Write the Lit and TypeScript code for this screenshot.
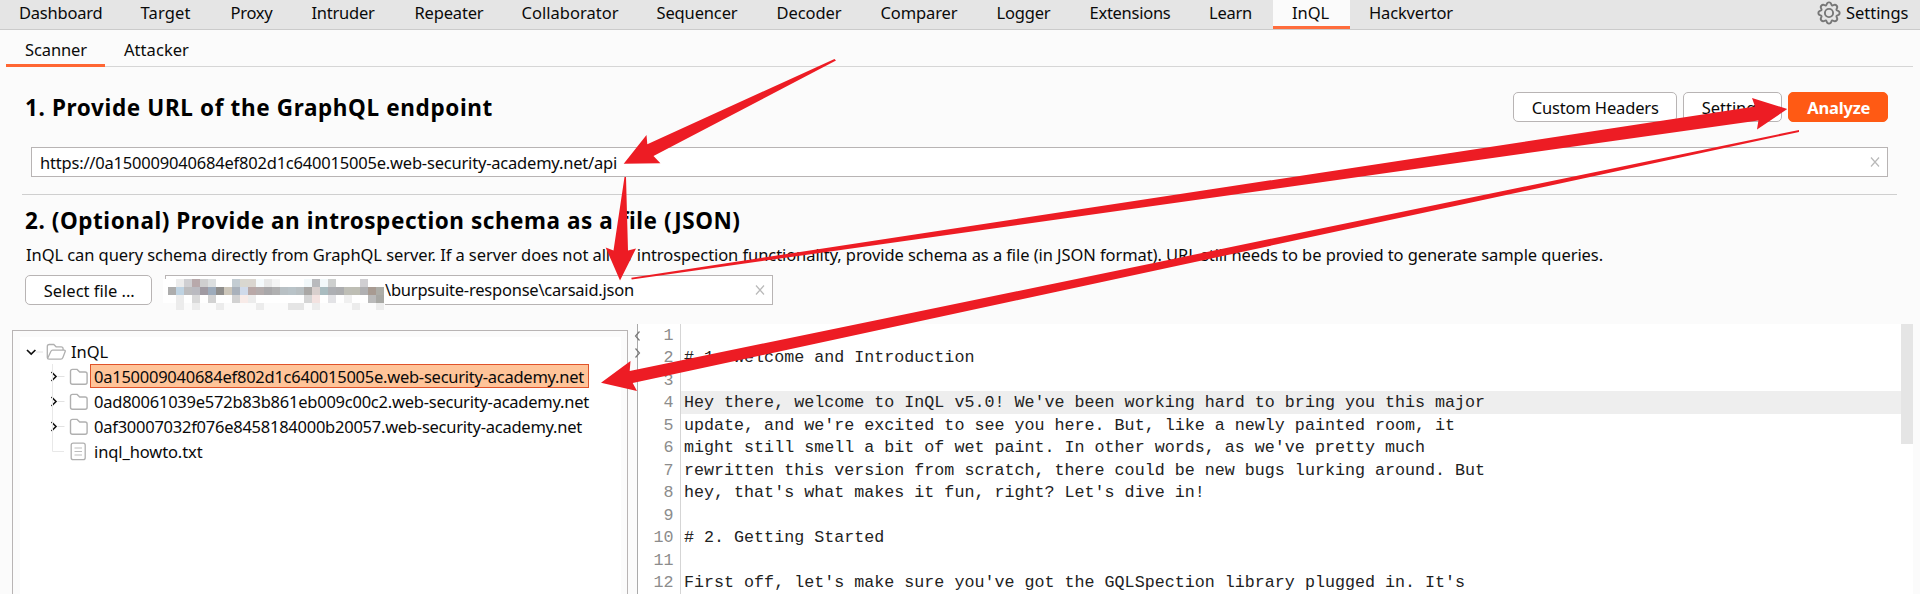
import { LitElement, html, css, svg } from "lit";
import { customElement, property, query } from "lit/decorators.js";
import { classMap } from "lit/directives/class-map.js";
import { styleMap } from "lit/directives/style-map.js";

/** A single line of text whose tracking is adjusted so it spans a given width. */
@customElement("fit-text")
class FitText extends LitElement {
  @property({ type: Number }) width = 0;
  @property() text = "";
  @query("span") span!: HTMLSpanElement;

  static styles = css`
    :host { display: block; flex: none; white-space: pre; }
    span { display: inline-block; }
  `;

  updated() {
    this.span.style.letterSpacing = "0px";
    const natural = this.span.getBoundingClientRect().width;
    if (this.width && natural) {
      this.span.style.letterSpacing = `${(this.width - natural) / this.text.length}px`;
    }
  }

  render() {
    return html`<span>${this.text}</span>`;
  }
}

const TABS: { label: string; tab: number; text: number }[] = [
  { label: "Dashboard", tab: 121.5, text: 83.5 },
  { label: "Target", tab: 90, text: 50 },
  { label: "Proxy", tab: 81, text: 42 },
  { label: "Intruder", tab: 103, text: 63 },
  { label: "Repeater", tab: 107, text: 69 },
  { label: "Collaborator", tab: 135, text: 97 },
  { label: "Sequencer", tab: 120, text: 81 },
  { label: "Decoder", tab: 104, text: 65 },
  { label: "Comparer", tab: 116, text: 77 },
  { label: "Logger", tab: 93, text: 54 },
  { label: "Extensions", tab: 119.5, text: 81 },
  { label: "Learn", tab: 83, text: 43 },
  { label: "InQL", tab: 77, text: 37 },
  { label: "Hackvertor", tab: 120, text: 84 },
];

const NODES = [
  { label: "0a150009040684ef802d1c640015005e.web-security-academy.net", width: 490, selected: true },
  { label: "0ad80061039e572b83b861eb009c00c2.web-security-academy.net", width: 495, selected: false },
  { label: "0af30007032f076e8458184000b20057.web-security-academy.net", width: 488, selected: false },
];

const LINES = [
  "",
  "# 1. Welcome and Introduction",
  "",
  "Hey there, welcome to InQL v5.0! We've been working hard to bring you this major",
  "update, and we're excited to see you here. But, like a newly painted room, it",
  "might still smell a bit of wet paint. In other words, as we've pretty much",
  "rewritten this version from scratch, there could be new bugs lurking around. But",
  "hey, that's what makes it fun, right? Let's dive in!",
  "",
  "# 2. Getting Started",
  "",
  "First off, let's make sure you've got the GQLSpection library plugged in. It's",
];

/* Redaction mosaic over the start of the file path, row by row. */
const W = "#ffffff";
const E = "#ececec";
const T = "transparent";
const MOSAIC = [
  [W, E, "#cfcfd2", "#b8a9ab", "#cfcfd0", "#dcdfe0", W, W, "#c3ccd2", "#d9d7d0", "#dad6d0", "#f5fafc", "#e8e8e8", "#f5f5f5", W, W, W, "#f2f8fa", "#b9babd", "#f2f8fa", "#cdcfce", W, W, W, "#d0cfd2", W, W],
  ["#adadad", "#bfd3e2", "#bcbcbe", "#babac0", "#a09aa2", "#9dabbb", "#8f8e8c", "#ccc6ba", "#a9b1bb", "#d0daea", "#b9a8a7", "#b4acac", "#a9a8aa", "#b0b0b1", "#b8c0c4", "#b9c3c8", "#b8bfc2", "#a9a7a5", "#d8cfcd", "#a9bcc0", "#adafb3", "#acadaf", "#bebeb6", "#bebeb4", "#b0b0b2", "#a89b92", "#adada7"],
  [W, E, W, "#d9d9d9", W, "#d2d2d2", W, W, "#d2d2d2", "#f8ebe8", E, W, W, W, W, W, W, "#d5d5d5", "#f3e2e0", W, "#e3e3e6", W, "#f0f0f0", W, W, "#bababa", "#a8a8a4"],
  [T, E, T, E, T, T, E, T, T, T, T, E, T, T, T, "#e5e5e5", "#e5e5e5", T, E, T, T, T, T, E, T, T, E],
];

const gear = svg`<svg class="gear" width="24" height="24" viewBox="0 0 24 24" fill="none" stroke="#777" stroke-width="1.9" stroke-linejoin="round">
  <path d="M9.6 3.6 C10 1.8 10.6 1.4 12 1.4 C13.4 1.4 14 1.8 14.4 3.6 C14.7 4.6 15.4 4.8 16.2 4.3 C17.8 3.3 18.6 3.5 19.5 4.5 C20.5 5.4 20.7 6.2 19.7 7.8 C19.2 8.6 19.4 9.3 20.4 9.6 C22.2 10 22.6 10.6 22.6 12 C22.6 13.4 22.2 14 20.4 14.4 C19.4 14.7 19.2 15.4 19.7 16.2 C20.7 17.8 20.5 18.6 19.5 19.5 C18.6 20.5 17.8 20.7 16.2 19.7 C15.4 19.2 14.7 19.4 14.4 20.4 C14 22.2 13.4 22.6 12 22.6 C10.6 22.6 10 22.2 9.6 20.4 C9.3 19.4 8.6 19.2 7.8 19.7 C6.2 20.7 5.4 20.5 4.5 19.5 C3.5 18.6 3.3 17.8 4.3 16.2 C4.8 15.4 4.6 14.7 3.6 14.4 C1.8 14 1.4 13.4 1.4 12 C1.4 10.6 1.8 10 3.6 9.6 C4.6 9.3 4.8 8.6 4.3 7.8 C3.3 6.2 3.5 5.4 4.5 4.5 C5.4 3.5 6.2 3.3 7.8 4.3 C8.6 4.8 9.3 4.6 9.6 3.6 Z"/>
  <circle cx="12" cy="12" r="4.1"/>
</svg>`;

const cross = svg`<svg class="cross" width="10" height="10" viewBox="0 0 10 10" stroke="#b9b9b9" stroke-width="1.2"><path d="M1 .5L9 9.500M9 .5L1 9.500"/></svg>`;

const branch = svg`<svg class="glyph" width="40" height="25" viewBox="0 0 40 25" fill="none">
  <path d="M15.5 12.5h7" stroke="#e2e2e2"/>
  <path d="M9.5 8l4.5 4.5L9.5 17" stroke="#111" stroke-width="1.6"/>
  <path d="M28.5 7.400q0-2 2-2h4.600l2.600 2.600h5.400q2 0 2 2v8.300q0 2-2 2h-12.600q-2 0-2-2z" stroke="#b0b0b0" stroke-width="1.400"/>
</svg>`;

@customElement("app-root")
class AppRoot extends LitElement {
  static styles = css`
    :host {
      display: block; position: relative; width: 1920px; height: 594px; overflow: hidden;
      background: #fbfbfb; color: #0a0a0a;
      font-family: "Noto Sans", "Open Sans", sans-serif; font-size: 16.5px; line-height: 24px;
    }
    * { box-sizing: border-box; }
    svg { display: block; flex: none; overflow: visible; }
    .nav { display: flex; height: 30px; background: #e5e5e5; border-bottom: 1px solid #cbcbcb; }
    .tab { flex: none; height: 29px; padding: 1px 0 0 19px; }
    .tab.on { background: #fbfbfb; border-bottom: 3px solid #ff6d3d; }
    .prefs { display: flex; margin-left: auto; padding: 1px 11.500px 0 0; gap: 5px; }
    .subnav { display: flex; height: 37px; margin: 0 7px 0 6px; border-bottom: 1px solid #d6d6d6; }
    .sub { height: 37px; width: 99px; padding: 8px 0 0 19px; }
    .sub.on { border-bottom: 3px solid #ff6633; }
    .head { display: flex; justify-content: space-between; margin: 25px 32px 0 25px; height: 30px; }
    h2 { margin: 0; font-size: 22.500px; line-height: 29px; font-weight: 700; color: #000; }
    .head h2 { line-height: 31px; }
    .buttons { display: flex; gap: 6.5px; }
    .btn {
      display: flex; justify-content: center; height: 30px; padding: 3px 0 0 1.500px; background: #fff;
      border: 1.500px solid #b8b4b4; border-radius: 5px;
    }
    .headers { width: 164px; }
    .settings { width: 98.5px; }
    .analyze { width: 100px; background: #ff5a14; border-color: #ff5a14; color: #fff; font-weight: 700; }
    .field {
      display: flex; justify-content: space-between; height: 30px; background: #fff;
      border: 1.5px solid #b8b4b4; padding: 3px 7px 0 8px;
    }
    .field .cross { margin-top: 6px; }
    .url { margin: 25px 32px 0 31px; }
    .rule { margin: 17px 23px 0 22px; height: 1px; background: #cfcfcf; }
    .title2 { margin: 10.500px 0 0 25px; }
    .desc { margin: 8px 0 0 26px; height: 24px; }
    .pick { display: flex; margin: 8px 0 0 25px; gap: 13px; height: 30px; }
    .select { width: 127px; }
    .file { position: relative; width: 608px; padding-left: 219px; padding-top: 2px; }
    .file .cross { margin-top: 7px; }
    .mosaic {
      position: absolute; left: -3px; top: 3px; width: 222px; padding-left: 5px;
      display: grid; grid-template-columns: repeat(27, 8px); grid-template-rows: 8.500px 8px 8px 7px;
      background: linear-gradient(#fff 24.500px, #fbfbfb 24.500px);
    }
    .cell { display: block; }
    .work { display: flex; height: 270px; margin-top: 19px; }
    .tree {
      flex: none; width: 616px; margin: 6px 0 0 12px; height: 280px; border: 1px solid #b8b4b4; padding: 6.500px 6px 0 7px;
    }
    .sheet { background: #fff; height: 280px; padding-top: 1.500px; }
    .node { display: flex; height: 25px; line-height: 25px; }
    .root .glyph { margin-left: 5px; }
    .root fit-text { margin-left: 2px; }
    .child .glyph { margin-left: 22px; }
    .name { height: 24px; line-height: 23px; margin-left: 8px; padding: 0 4px 0 3px; border: 1px solid transparent; }
    .name.on { background: #ffc499; border-color: #e0532a; }
    .divider { flex: none; width: 14px; margin-left: 6px; position: relative; z-index: 1; }
    .editor {
      flex: none; width: 1276px; margin-left: -11px; background: #fff; display: flex; border-left: 1px solid #aaa;
      height: 270px; font-family: "Liberation Mono", monospace; font-size: 16.700px; line-height: 23.500px;
    }
    .gutter { flex: none; width: 43px; border-right: 1px solid #d5d5d5; padding-right: 6.500px; text-align: right; color: #8c8c8c; }
    .code { flex: 1; white-space: pre; color: #222; }
    .line { height: 22.500px; }
    .code .line { padding-left: 3px; }
    .line.on { background: #eee; }
    .thumb { width: 12px; height: 120px; background: #e5e5e5; }
    .arrows { position: absolute; left: 0; top: 0; z-index: 2; }
  `;

  render() {
    return html`
      <div class="nav">
        ${TABS.map((t) => html`
          <div class=${classMap({ tab: true, on: t.label === "InQL" })} style=${styleMap({ width: `${t.tab}px` })}>
            <fit-text .text=${t.label} .width=${t.text}></fit-text>
          </div>`)}
        <div class="prefs">${gear}<fit-text text="Settings" width="62.5"></fit-text></div>
      </div>
      <div class="subnav">
        <div class="sub on"><fit-text text="Scanner" width="62"></fit-text></div>
        <div class="sub"><fit-text text="Attacker" width="65"></fit-text></div>
      </div>

      <div class="head">
        <h2><fit-text text="1. Provide URL of the GraphQL endpoint" width="468"></fit-text></h2>
        <div class="buttons">
          <div class="btn headers"><fit-text text="Custom Headers" width="127"></fit-text></div>
          <div class="btn settings"><fit-text text="Settings" width="62.5"></fit-text></div>
          <div class="btn analyze"><fit-text text="Analyze" width="63"></fit-text></div>
        </div>
      </div>
      <div class="field url">
        <fit-text text="https://0a150009040684ef802d1c640015005e.web-security-academy.net/api" width="577"></fit-text>
        ${cross}
      </div>
      <div class="rule"></div>

      <h2 class="title2"><fit-text text="2. (Optional) Provide an introspection schema as a file (JSON)" width="715.5"></fit-text></h2>
      <div class="desc">
        <fit-text
          text="InQL can query schema directly from GraphQL server. If a server does not allow introspection functionality, provide schema as a file (in JSON format). URL still needs to be provied to generate sample queries."
          width="1577"></fit-text>
      </div>
      <div class="pick">
        <div class="btn select"><fit-text text="Select file ..." width="91"></fit-text></div>
        <div class="field file">
          <fit-text text="\\burpsuite-response\\carsaid.json" width="249"></fit-text>
          ${cross}
          <div class="mosaic">
            ${MOSAIC.flat().map((c) => html`<i class="cell" style=${styleMap({ background: c })}></i>`)}
          </div>
        </div>
      </div>

      <div class="work">
        <div class="tree">
          <div class="sheet">
            <div class="node root">
              <svg class="glyph" width="44" height="25" viewBox="0 0 44 25" fill="none">
                <path d="M11 13h7" stroke="#e2e2e2" />
                <path d="M2 11l4.200 4 4.200-4" stroke="#111" stroke-width="1.700" />
                <path d="M22.300 18.500V7.500q0-2 2-2h4.500l2.300 2.300h5q2 0 2 2v1.200M22.800 19l3-6.500q.6-1.300 1.800-1.300h11.600q1.500 0 1 1.400l-2.300 6q-.6 1.600-2 1.600H24q-1.700 0-1.700-1.700" stroke="#b0b0b0" stroke-width="1.300" />
              </svg>
              <fit-text text="InQL" width="37"></fit-text>
            </div>
            ${NODES.map((n) => html`
              <div class="node child">
                ${branch}
                <div class=${classMap({ name: true, on: n.selected })}><fit-text .text=${n.label} .width=${n.width}></fit-text></div>
              </div>`)}
            <div class="node child">
              <svg class="glyph" width="40" height="25" viewBox="0 0 40 25" fill="none">
                <path d="M10.500-75V12.500H22" stroke="#e8e8e8" />
                <rect x="29.200" y="4.200" width="14" height="16.500" rx="2" stroke="#b0b0b0" stroke-width="1.300" />
                <path d="M32.500 9h7.500M32.500 12.500h7.500M32.500 16h7.500" stroke="#bdbdbd" />
              </svg>
              <div class="name"><fit-text text="inql_howto.txt" width="108.5"></fit-text></div>
            </div>
          </div>
        </div>
        <div class="divider">
          <svg width="14" height="40" viewBox="0 0 14 40" fill="none" stroke="#777" stroke-width="1.200">
            <path d="M5.500 7.500L1.500 12l4 4.500M1.500 24.500L5.500 29l-4 4.500" />
          </svg>
        </div>
        <div class="editor">
          <div class="gutter">${LINES.map((_, i) => html`<div class="line">${i + 1}</div>`)}</div>
          <div class="code">${LINES.map((l, i) => html`<div class=${classMap({ line: true, on: i === 3 })}>${l}</div>`)}</div>
          <div class="thumb"></div>
        </div>
      </div>

      <svg class="arrows" width="1920" height="594" viewBox="0 0 1920 594" fill="#ed1c24">
        <path d="M623.700 163.700L646.500 135L647.300 144.300L834.500 59L836 60.500L653.500 156L660.400 163.300Z" />
        <path d="M624.500 177H626L628 250.500L636 248.500L620 280.500L605.700 247.500L613.500 250.500Z" />
        <path d="M631.300 277.700L1755 106.500L1752 98L1787.300 109L1757 129.500L1758.400 120.500L631.700 279.500Z" />
        <path d="M1799 130L629.700 371L630.500 361L601 382.700L637 391L632.700 383L1799 132Z" />
      </svg>
    `;
  }
}
